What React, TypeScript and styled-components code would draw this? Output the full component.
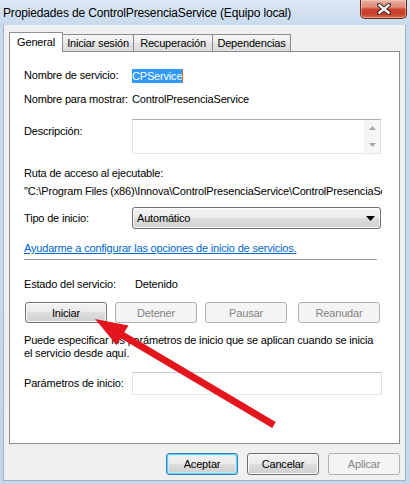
import React from "react";
import styled, { createGlobalStyle, css } from "styled-components";

const Global = createGlobalStyle`
  html, body { margin: 0; padding: 0; background: #fff; }
  body { width: 410px; height: 484px; overflow: hidden; }
  * { box-sizing: border-box; }
`;

const Window = styled.div`
  position: relative;
  width: 410px;
  height: 484px;
  display: flex;
  flex-direction: column;
  padding: 0 4px 3px 3px;
  background: linear-gradient(180deg, #dbe7f5 0px, #c9daee 25px, #c6d7ec 100%);
  font-family: "Liberation Sans", Arial, sans-serif;
  font-size: 11px;
  letter-spacing: -0.18px;
  color: #000;
`;

const TitleBar = styled.div`
  height: 25px;
  flex: none;
  display: flex;
  align-items: flex-start;
`;

const Title = styled.div`
  font-size: 12px;
  line-height: 16px;
  padding-top: 5px;
  letter-spacing: -0.15px;
  white-space: nowrap;
`;

const CloseButton = styled.div`
  margin-left: auto;
  margin-right: -1px;
  width: 47px;
  height: 19px;
  border: 1px solid #6a2a22;
  border-top: none;
  border-radius: 0 0 5px 5px;
  background: linear-gradient(
    180deg,
    #eab0a3 0%,
    #df8a76 40%,
    #c9452f 52%,
    #c53f29 75%,
    #d9684c 100%
  );
  box-shadow: inset 0 0 0 1px rgba(255, 220, 210, 0.45);
  display: flex;
  align-items: center;
  justify-content: center;
`;

const Client = styled.div`
  flex: 1;
  display: flex;
  flex-direction: column;
  background: #f0f0f0;
  border: 1px solid #9fb1c8;
  border-top: none;
  padding: 7px 5px 0 5px;
`;

const TabStrip = styled.div`
  height: 19px;
  flex: none;
  display: flex;
  align-items: flex-end;
`;

const Tab = styled.div<{ $w: number; $active?: boolean }>`
  position: relative;
  z-index: 2;
  width: ${(p) => p.$w}px;
  height: 17px;
  margin-right: -1px;
  border: 1px solid #898c95;
  border-bottom: none;
  border-radius: 1px 1px 0 0;
  background: linear-gradient(180deg, #f5f5f5 0%, #ececec 50%, #e2e2e2 51%, #dcdcdc 100%);
  display: flex;
  align-items: center;
  justify-content: center;
  white-space: nowrap;
  ${(p) =>
    p.$active &&
    css`
      height: 20px;
      margin-bottom: -1px;
      background: #fff;
      padding-bottom: 1px;
    `}
`;

const Panel = styled.div`
  position: relative;
  z-index: 1;
  flex: 1;
  background: #fff;
  border: 1px solid #898c95;
  padding: 16px 17px 0 14px;
  display: flex;
  flex-direction: column;
`;

const Row = styled.div<{ $mt: number; $top?: boolean }>`
  display: flex;
  align-items: ${(p) => (p.$top ? "flex-start" : "center")};
  margin-top: ${(p) => p.$mt}px;
  line-height: 15px;
  white-space: nowrap;
`;

const Label = styled.div<{ $w?: number; $pt?: number }>`
  flex: none;
  width: ${(p) => p.$w ?? 108}px;
  padding-top: ${(p) => p.$pt ?? 0}px;
`;

const Selected = styled.span`
  display: inline-block;
  height: 14px;
  line-height: 14px;
  background: #3399ff;
  color: #fff;
  box-shadow: 1px 0 0 #c8681c;
`;

const TextArea = styled.div`
  width: 249px;
  height: 35px;
  border: 1px solid;
  border-color: #abadb3 #dbdfe6 #e3e9ef #e2e3ea;
  display: flex;
  justify-content: flex-end;
`;

const ScrollBar = styled.div`
  width: 16px;
  display: flex;
  flex-direction: column;
  background: linear-gradient(90deg, #f3f3f3, #f8f8f8);
`;

const ScrollArrow = styled.div`
  flex: 1;
  display: flex;
  align-items: center;
  justify-content: center;
`;

const PathBlock = styled.div<{ $mt: number }>`
  margin-top: ${(p) => p.$mt}px;
  line-height: 18px;
  white-space: nowrap;
  overflow: hidden;
`;

const Combo = styled.div`
  width: 249px;
  height: 22px;
  border: 1px solid #707070;
  border-radius: 3px;
  background: linear-gradient(180deg, #f3f3f3 0%, #ebebeb 50%, #dddddd 51%, #d2d2d2 100%);
  box-shadow: inset 0 0 0 1px rgba(255, 255, 255, 0.7);
  display: flex;
  align-items: center;
  padding: 0 4px 0 4px;
`;

const ComboArrow = styled.svg`
  margin-left: auto;
  margin-right: 1px;
`;

const Link = styled.a`
  display: block;
  margin-top: 12px;
  line-height: 15px;
  color: #0066cc;
  text-decoration: underline;
  white-space: nowrap;
  cursor: pointer;
`;

const Separator = styled.div`
  margin-top: 3px;
  width: 353px;
  height: 1px;
  background: #a0a0a0;
`;

const ButtonRow = styled.div`
  margin-top: 10px;
  display: flex;
  gap: 8px;
  padding: 0 2px 0 1px;
`;

const Button = styled.div<{ $w: number; $h: number; $variant?: "normal" | "disabled" | "default"; $push?: boolean }>`
  width: ${(p) => p.$w}px;
  height: ${(p) => p.$h}px;
  flex: none;
  margin-left: ${(p) => (p.$push ? "auto" : "0")};
  border: 1px solid #707070;
  border-radius: 3px;
  background: linear-gradient(180deg, #f2f2f2 0%, #ebebeb 49%, #dddddd 50%, #cfcfcf 100%);
  box-shadow: inset 0 0 0 1px #fbfbfb;
  display: flex;
  align-items: center;
  justify-content: center;
  color: #000;
  ${(p) =>
    p.$variant === "disabled" &&
    css`
      border-color: #adb2b5;
      background: #f4f4f4;
      box-shadow: none;
      color: #838383;
    `}
  ${(p) =>
    p.$variant === "default" &&
    css`
      border-color: #3c7fb1;
      box-shadow: inset 0 0 0 1px #5fd0f6, inset 0 0 0 2px rgba(200, 240, 252, 0.6);
    `}
`;

const Paragraph = styled.div`
  margin-top: 11px;
  line-height: 13px;
`;

const Input = styled.div`
  width: 250px;
  height: 23px;
  border: 1px solid;
  border-color: #c5c8ce #dbdfe6 #e3e9ef #e2e3ea;
  background: #fff;
`;

const Footer = styled.div`
  flex: none;
  display: flex;
  justify-content: flex-end;
  gap: 9px;
  padding: 9px 0 5px;
`;

const Overlay = styled.svg`
  position: absolute;
  left: 0;
  top: 0;
  z-index: 5;
  pointer-events: none;
`;

export default function App() {
  return (
    <>
      <Global />
      <Window>
        <TitleBar>
          <Title>Propiedades de ControlPresenciaService (Equipo local)</Title>
          <CloseButton>
            <svg width="14" height="12" viewBox="0 0 14 12">
              <path d="M2 2 L12 10 M12 2 L2 10" stroke="#3b1c18" strokeWidth="4.4" strokeLinecap="square" />
              <path d="M2.3 2.2 L11.7 9.8 M11.7 2.2 L2.3 9.8" stroke="#f4f4f4" strokeWidth="2.4" strokeLinecap="square" />
            </svg>
          </CloseButton>
        </TitleBar>
        <Client>
          <TabStrip>
            <Tab $w={54} $active>General</Tab>
            <Tab $w={72}>Iniciar sesión</Tab>
            <Tab $w={80}>Recuperación</Tab>
            <Tab $w={79}>Dependencias</Tab>
          </TabStrip>
          <Panel>
            <Row $mt={0}>
              <Label>Nombre de servicio:</Label>
              <Selected>CPService</Selected>
            </Row>
            <Row $mt={9}>
              <Label>Nombre para mostrar:</Label>
              <span>ControlPresenciaService</span>
            </Row>
            <Row $mt={12} $top>
              <Label $pt={5}>Descripción:</Label>
              <TextArea>
                <ScrollBar>
                  <ScrollArrow>
                    <svg width="7" height="4" viewBox="0 0 7 4">
                      <polygon points="3.5,0 7,4 0,4" fill="#a8a8a8" />
                    </svg>
                  </ScrollArrow>
                  <ScrollArrow>
                    <svg width="7" height="4" viewBox="0 0 7 4">
                      <polygon points="0,0 7,0 3.5,4" fill="#a8a8a8" />
                    </svg>
                  </ScrollArrow>
                </ScrollBar>
              </TextArea>
            </Row>
            <PathBlock $mt={10}>
              Ruta de acceso al ejecutable:
              <br />
              "C:\Program Files (x86)\Innova\ControlPresenciaService\ControlPresenciaService.exe"
            </PathBlock>
            <Row $mt={7}>
              <Label>Tipo de inicio:</Label>
              <Combo>
                Automático
                <ComboArrow width="9" height="5" viewBox="0 0 9 5">
                  <polygon points="0,0 9,0 4.5,5" fill="#000" />
                </ComboArrow>
              </Combo>
            </Row>
            <Link>Ayudarme a configurar las opciones de inicio de servicios.</Link>
            <Separator />
            <Row $mt={17}>
              <Label $w={111}>Estado del servicio:</Label>
              <span>Detenido</span>
            </Row>
            <ButtonRow>
              <Button $w={82} $h={21}>Iniciar</Button>
              <Button $w={82} $h={21} $variant="disabled">Detener</Button>
              <Button $w={82} $h={21} $variant="disabled">Pausar</Button>
              <Button $w={82} $h={21} $variant="disabled" $push>Reanudar</Button>
            </ButtonRow>
            <Paragraph>
              Puede especificar los parámetros de inicio que se aplican cuando se inicia
              <br />
              el servicio desde aquí.
            </Paragraph>
            <Row $mt={12}>
              <Label>Parámetros de inicio:</Label>
              <Input />
            </Row>
          </Panel>
          <Footer>
            <Button $w={72} $h={22} $variant="default">Aceptar</Button>
            <Button $w={72} $h={22}>Cancelar</Button>
            <Button $w={72} $h={22} $variant="disabled">Aplicar</Button>
          </Footer>
        </Client>
        <Overlay width="410" height="484" viewBox="0 0 410 484">
          <line x1="274" y1="425" x2="122" y2="335" stroke="#e3161d" strokeWidth="7" />
          <polygon points="95,319 128.5,325.5 116.5,345" fill="#e3161d" />
        </Overlay>
      </Window>
    </>
  );
}
